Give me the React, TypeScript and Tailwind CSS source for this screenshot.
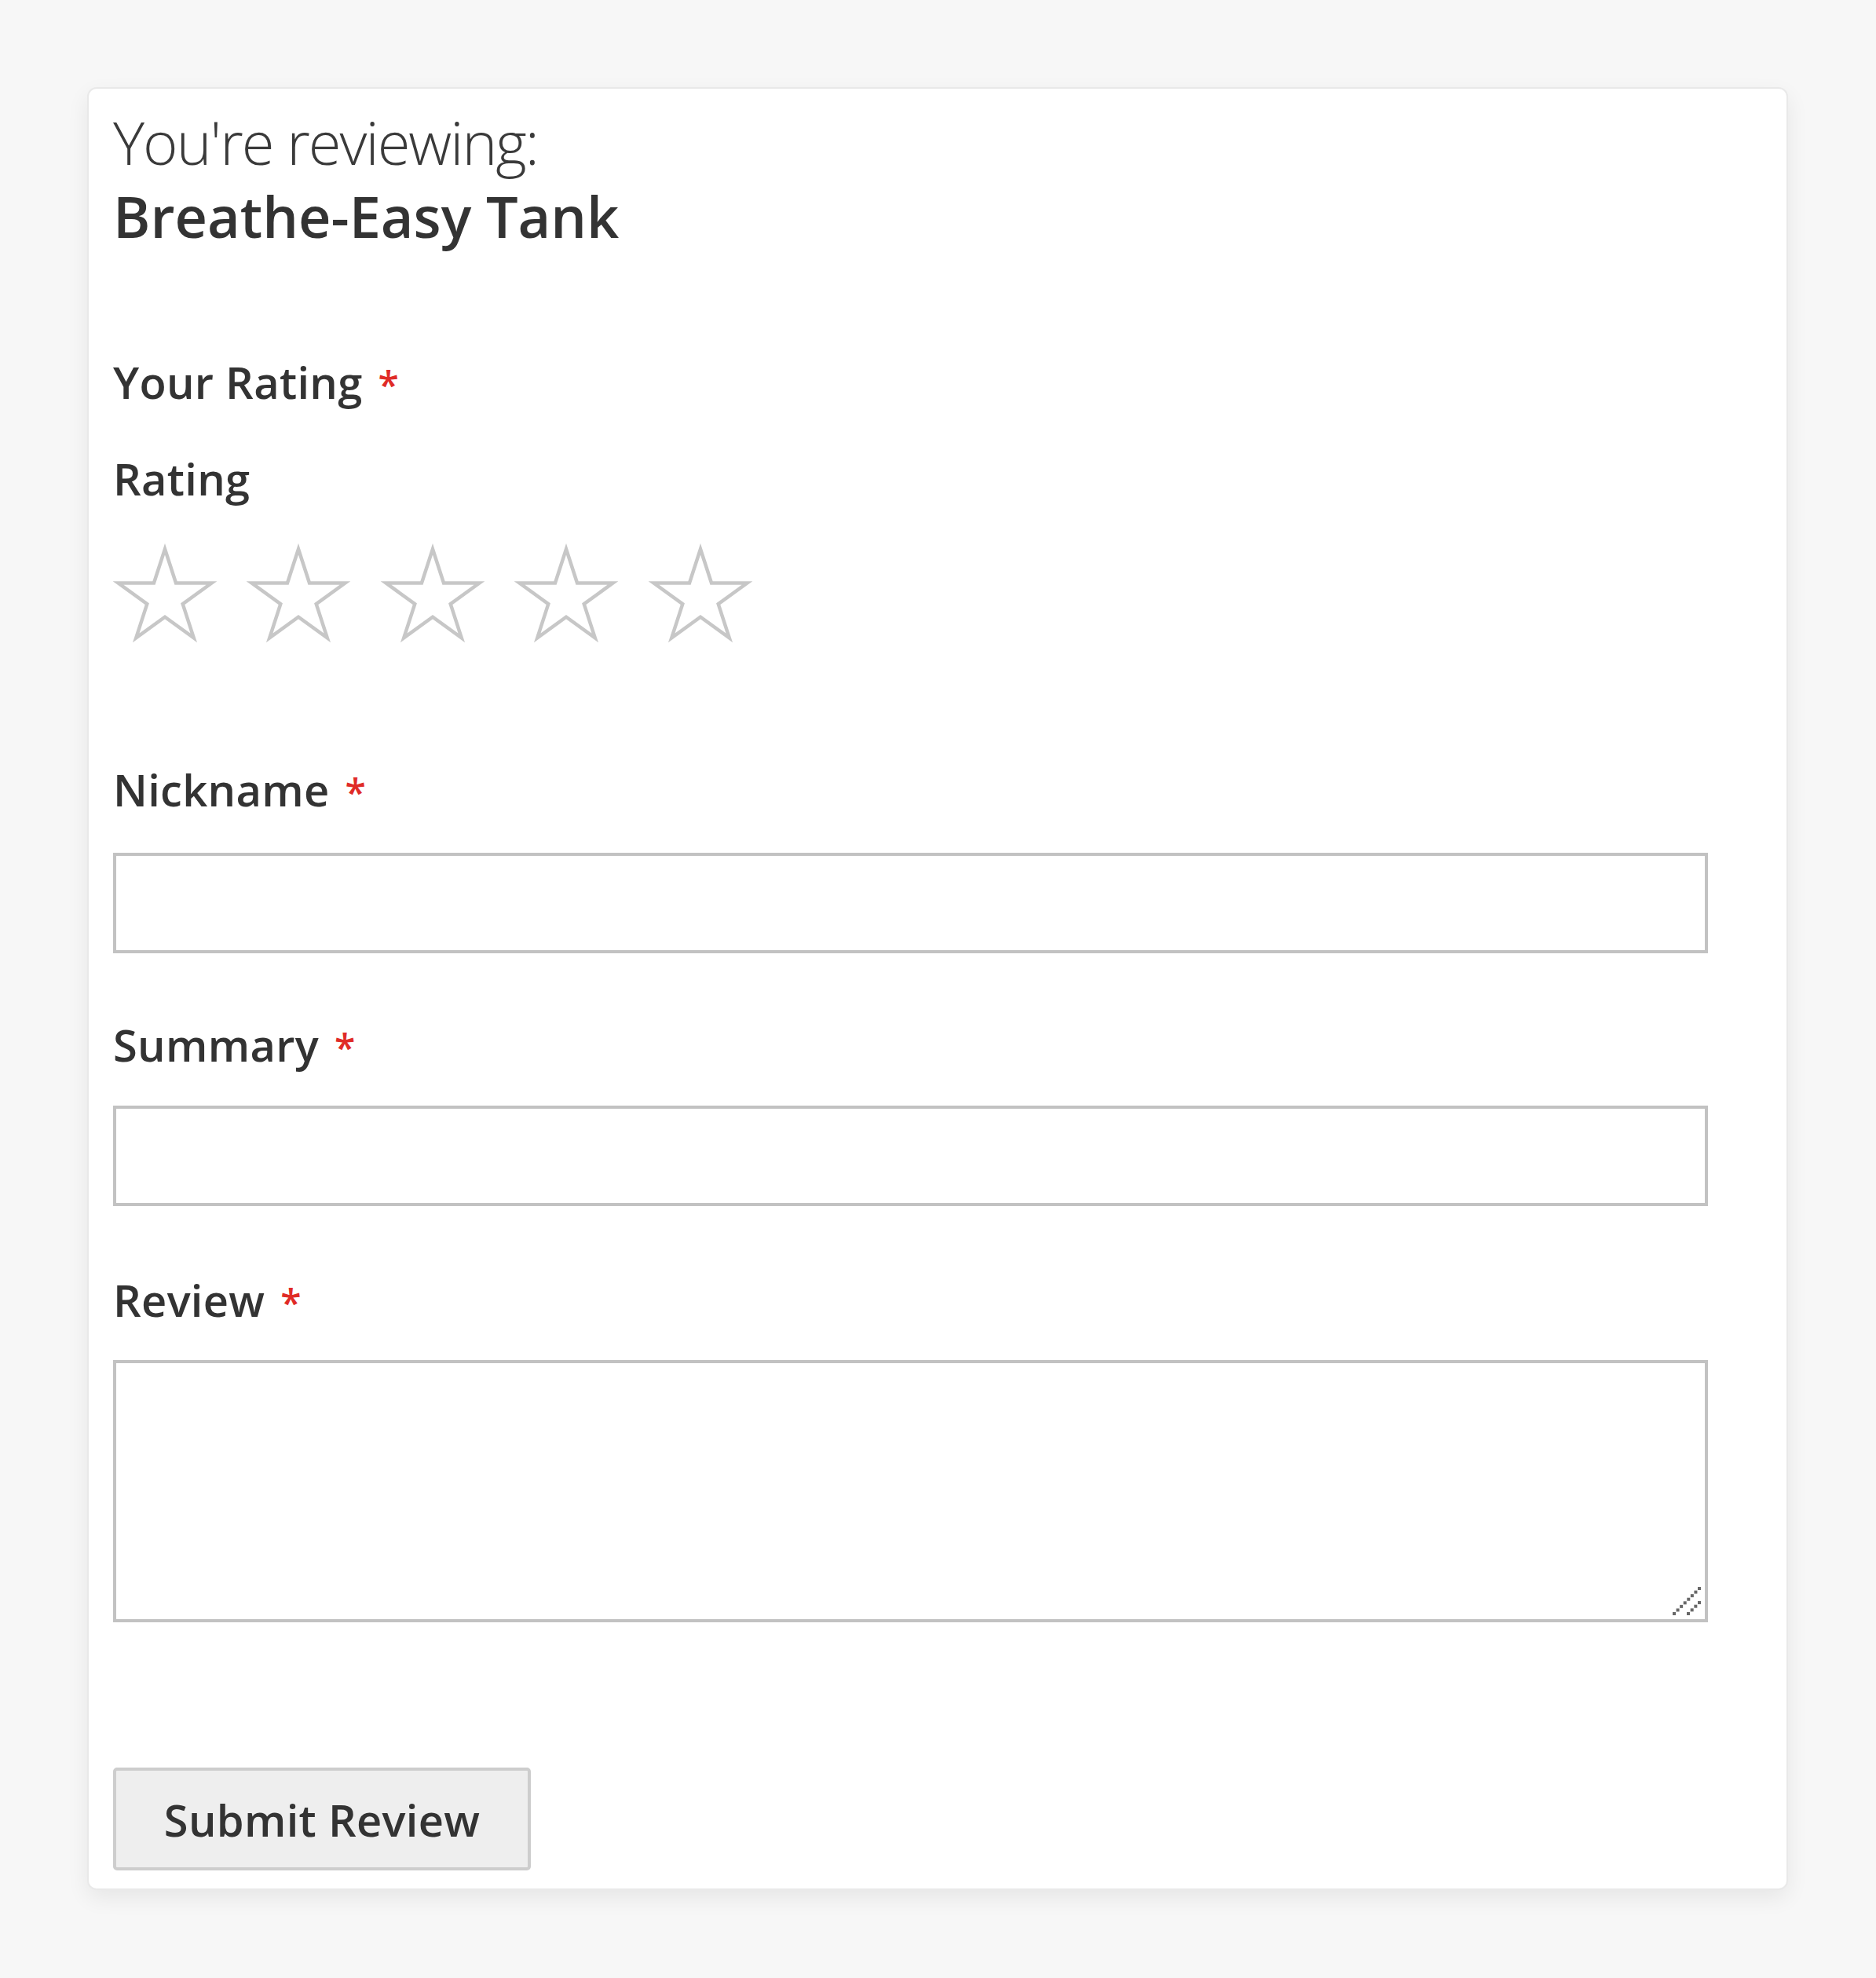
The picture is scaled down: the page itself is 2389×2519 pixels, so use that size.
import React from "react";

const STAR_R = 62.5;
const STAR_CX = 66;
const STAR_CY = 72.8;

function starPoints() {
  const pts: string[] = [];
  for (let i = 0; i < 10; i++) {
    const r = i % 2 === 0 ? STAR_R : STAR_R * 0.382;
    const a = (Math.PI / 5) * i - Math.PI / 2;
    pts.push(`${(STAR_CX + r * Math.cos(a)).toFixed(2)},${(STAR_CY + r * Math.sin(a)).toFixed(2)}`);
  }
  return pts.join(" ");
}

function Star() {
  return (
    <svg width="136" height="132" viewBox="0 0 136 132" className="overflow-visible shrink-0">
      <polygon points={starPoints()} fill="none" stroke="#c7c7c7" strokeWidth="4.5" strokeLinejoin="miter" />
    </svg>
  );
}

function ResizeGrip() {
  const longDots = Array.from({ length: 8 }, (_, i) => ({ x: 3 + i * 4.57, y: 35 - i * 4.57 }));
  const shortDots = Array.from({ length: 4 }, (_, i) => ({ x: 21 + i * 4.67, y: 35 - i * 4.67 }));
  return (
    <svg width="40" height="40" viewBox="0 0 40 40" className="absolute right-[8px] bottom-[8px] pointer-events-none">
      {[...longDots, ...shortDots].map((d, i) => (
        <rect key={i} x={d.x} y={d.y} width="4" height="4" fill="#686868" />
      ))}
    </svg>
  );
}

function FieldLabel({ text, className = "" }: { text: string; className?: string }) {
  return (
    <div className={`flex items-baseline h-[56px] text-[56px] leading-[56px] font-semibold text-[#333333] tracking-[0.3px] ${className}`}>
      <span>{text}</span>
      <span className="ml-[20px] text-[48px] leading-none text-[#e02b27]">*</span>
    </div>
  );
}

export default function App() {
  return (
    <div
      className="min-h-[2519px] bg-[#f7f7f7] pt-[111px] pl-[111px]"
      style={{ fontFamily: '"Open Sans", "Noto Sans", Arial, sans-serif' }}
    >
      <div className="w-[2166px] bg-white border-[2px] border-[#e9e9e9] rounded-[12px] shadow-[0_10px_28px_rgba(0,0,0,0.07)] pl-[31px] pt-[30px] pb-[23px]">
        {/* Legend */}
        <div className="h-[76px] text-[76px] leading-[76px] font-light text-[#3a3a3a] tracking-[-2px]">You're reviewing:</div>
        <div className="mt-[20px] h-[73px] text-[72px] leading-[73px] font-semibold text-[#333333]">Breathe-Easy Tank</div>

        {/* Rating */}
        <FieldLabel text="Your Rating" className="mt-[146px]" />
        <div className="mt-[67px] h-[56px] text-[56px] leading-[56px] font-semibold text-[#333333] tracking-[0.3px]">Rating</div>
        <div className="mt-[52px] flex gap-[34.4px] h-[132px]">
          {[0, 1, 2, 3, 4].map((i) => (
            <Star key={i} />
          ))}
        </div>

        {/* Nickname */}
        <FieldLabel text="Nickname" className="mt-[156px]" />
        <input
          type="text"
          className="block mt-[53px] w-[2031px] h-[128px] bg-white border-[4px] border-[#c2c2c2] outline-none"
        />

        {/* Summary */}
        <FieldLabel text="Summary" className="mt-[88px]" />
        <input
          type="text"
          className="block mt-[50px] w-[2031px] h-[128px] bg-white border-[4px] border-[#c2c2c2] outline-none"
        />

        {/* Review */}
        <FieldLabel text="Review" className="mt-[91px]" />
        <div className="relative mt-[49px] w-[2031px] h-[334px]">
          <textarea className="block w-full h-full resize-none bg-white border-[4px] border-[#c2c2c2] outline-none" />
          <ResizeGrip />
        </div>

        {/* Submit */}
        <button className="mt-[185px] w-[532px] h-[131px] bg-[#eeeeee] border-[4px] border-[#cdcdcd] rounded-[5px] text-[56px] font-semibold text-[#333333] tracking-[0.3px] flex items-center justify-center">
          Submit Review
        </button>
      </div>
    </div>
  );
}
